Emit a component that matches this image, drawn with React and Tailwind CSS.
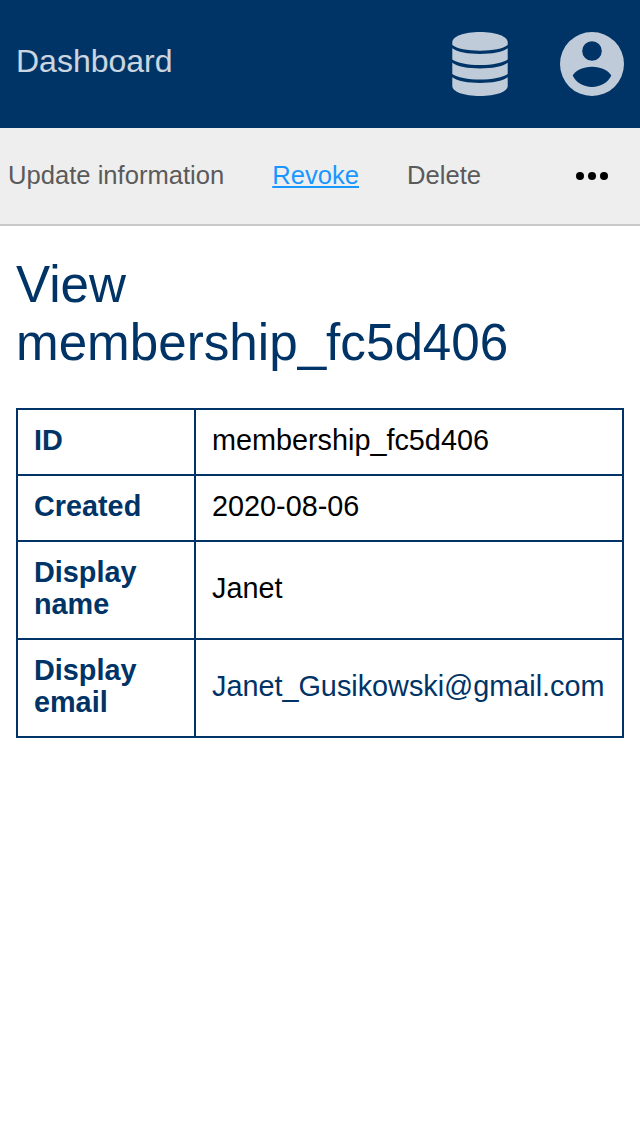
const rows = [
  { label: 'ID', value: 'membership_fc5d406', height: 'h-[66px]' },
  { label: 'Created', value: '2020-08-06', height: 'h-[66px]' },
  { label: 'Display name', value: 'Janet', height: 'h-[98px]' },
  { label: 'Display email', value: 'Janet_Gusikowski@gmail.com', height: 'h-[98px]', link: true },
];

function DatabaseIcon() {
  return (
    <svg viewBox="0 0 56 64" className="h-16 w-14" fill="currentColor" aria-hidden="true">
      <path d="M.3 10.3C.3 4.3 12 0 28 0s27.7 4.3 27.7 10.3V13C51 16.600 41 18.700 28 18.700S5 16.600.3 13z" />
      <path d="M.3 16.300C5 20 16 22 28 22s23-2 27.700-5.700v11.200C51 31 40 33 28 33S5 31 .3 27.500z" />
      <path d="M.3 30.800C5 34.500 16 36.500 28 36.500s23-2 27.700-5.700V42C51 45.500 40 47.500 28 47.500S5 45.500.3 42z" />
      <path d="M.3 45.300C5 49 16 51 28 51s23-2 27.700-5.700v8.700C55.700 59.700 44 64 28 64S.3 59.700.3 54z" />
    </svg>
  );
}

function AccountIcon() {
  return (
    <svg viewBox="0 0 64 64" className="size-16" fill="currentColor" aria-hidden="true">
      <path
        fillRule="evenodd"
        d="M32 0a32 32 0 1 1 0 64a32 32 0 1 1 0-64zM32 9.200a9.800 9.800 0 1 0 0 19.600a9.800 9.800 0 1 0 0-19.600zM12.700 43.600C15.500 38.300 23 34.800 32 34.800S48.500 38.300 51.300 43.600C48 50.500 41 55 32 55S16 50.500 12.700 43.600z"
      />
    </svg>
  );
}

export default function App() {
  return (
    <div className="min-h-[1136px] bg-white font-['Liberation_Sans',Arial,sans-serif] text-black">
      <header className="flex h-32 items-center justify-between bg-[#003366] px-4 text-white/75">
        <a className="pb-1.5 text-[32px] leading-9 text-white/80">Dashboard</a>
        <div className="flex items-center gap-[52px]">
          <DatabaseIcon />
          <AccountIcon />
        </div>
      </header>
      <nav className="flex h-[98px] items-center border-b-2 border-[#c8c8c8] bg-[#eeeeee] pr-8 pl-2 text-[25.6px] leading-8 text-[#5a5a5a]">
        <a className="pb-0.5">Update information</a>
        <a className="ml-12 pb-0.5 text-[#1997ff] underline">Revoke</a>
        <a className="ml-12 pb-0.5">Delete</a>
        <svg viewBox="0 0 32 8" className="ml-auto h-2 w-8" fill="#000000" aria-hidden="true">
          <circle cx="4" cy="4" r="4" />
          <circle cx="16" cy="4" r="4" />
          <circle cx="28" cy="4" r="4" />
        </svg>
      </nav>
      <main className="px-4 pt-[30px]">
        <h1 className="text-[51.2px] leading-[58px] text-[#003366]">View<br />membership_fc5d406</h1>
        <table className="mt-9 w-full table-fixed border-collapse text-left text-[28.8px] leading-8">
          <colgroup>
            <col className="w-[178px]" />
            <col />
          </colgroup>
          <tbody>
            {rows.map((row) => (
              <tr key={row.label} className={row.height}>
                <th className="border-2 border-[#003366] px-4 pt-0 pb-1 font-bold text-[#003366]">{row.label}</th>
                <td className="border-2 border-[#003366] px-4 pt-0 pb-1">
                  {row.link ? <a className="text-[#003366]">{row.value}</a> : row.value}
                </td>
              </tr>
            ))}
          </tbody>
        </table>
      </main>
    </div>
  );
}
